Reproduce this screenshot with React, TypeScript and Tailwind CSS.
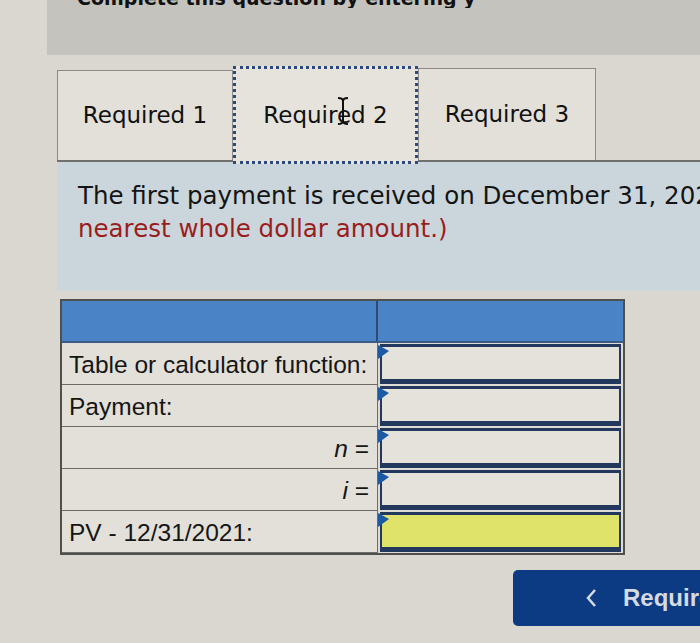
import React from "react";

function Flag() {
  return (
    <svg className="absolute left-0 top-[2px]" width="11" height="15" viewBox="0 0 11 15">
      <polygon points="0,0 11,6 0,14" fill="#1d5aa6" />
    </svg>
  );
}

function Row({ label, right, italic, yellow }: { label: string; right?: boolean; italic?: boolean; yellow?: boolean }) {
  return (
    <div className="flex h-[42px]">
      <div
        className={
          "w-[316px] h-full border-b border-r border-[#6b6b68] bg-[#e2e0d9] flex items-center pt-[4px] text-[24.5px] text-[#151515] " +
          (right ? "justify-end pr-[8px]" : "pl-[7px]")
        }
        style={{ fontFamily: '"Liberation Sans", Arial, sans-serif' }}
      >
        {italic ? (
          <span>
            <span className="italic">{label}</span> =
          </span>
        ) : (
          label
        )}
      </div>
      <div className="relative flex-1 h-full px-[2px] py-[1px] bg-[#dddbd3]">
        <div
          className={
            "h-full border-[#22385c] border-x-[2px] border-t-[3px] border-b-[5px] " +
            (yellow ? "bg-[#e0e36a]" : "bg-[#e4e2da]")
          }
        />
        <Flag />
      </div>
    </div>
  );
}

export default function App() {
  return (
    <div
      className="w-[700px] h-[643px] overflow-hidden bg-[#d9d7d0] relative"
      style={{ fontFamily: '"DejaVu Sans", Verdana, sans-serif' }}
    >
      {/* top grey panel */}
      <div className="ml-[47px] h-[55px] bg-[#c4c3be] overflow-hidden pl-[30px]">
        <div className="-mt-[12px] w-[398px] overflow-hidden text-[19px] leading-[20px] font-bold text-[#111] whitespace-nowrap">
          Complete this question by entering your answers in the tabs below.
        </div>
      </div>

      {/* tabs */}
      <div className="mt-[12px] ml-[57px] flex items-end h-[93px]">
        <div className="w-[176px] h-[90px] border border-b-0 border-[#8b8a86] bg-[#e2e0d9] flex items-center justify-center text-[23px] text-[#111]">
          Required 1
        </div>
        <div className="relative z-10 -mb-[4px] w-[185px] h-[98px] border-[3px] border-dotted border-[#2c4a7e] bg-[#e5e3dc] flex items-center justify-center text-[23px] text-[#111]">
          Required 2
          <svg className="absolute left-[100px] top-[27px]" width="14" height="30" viewBox="0 0 14 30">
            <path d="M2 2 Q7 2 7 5 Q7 2 12 2 M7 5 L7 25 M2 28 Q7 28 7 25 Q7 28 12 28" stroke="#111" strokeWidth="2" fill="none" />
          </svg>
        </div>
        <div className="w-[178px] h-[92px] border border-b-0 border-[#8b8a86] bg-[#e2e0d9] flex items-center justify-center text-[23px] text-[#111]">
          Required 3
        </div>
      </div>

      {/* instruction panel */}
      <div className="ml-[57px] h-[131px] bg-[#cbd6dc] border-t-[2px] border-[#6f6f6c] pl-[21px] pt-[17px] text-[24.5px] leading-[33px] whitespace-nowrap">
        <div className="text-[#141414]">The first payment is received on December 31, 2021</div>
        <div className="text-[#9a1d1d]">nearest whole dollar amount.)</div>
      </div>

      {/* table */}
      <div className="mt-[8px] ml-[60px] w-[565px] border-[2px] border-[#4f4f4d] bg-[#dddbd3]">
        <div className="flex h-[42px] bg-[#4a84c6] border-b-[2px] border-[#3a5c86]">
          <div className="w-[316px] h-full border-r-[2px] border-[#2e4a70]" />
          <div className="flex-1" />
        </div>
        <Row label="Table or calculator function:" />
        <Row label="Payment:" />
        <Row label="n" right italic />
        <Row label="i" right italic />
        <Row label="PV - 12/31/2021:" yellow />
      </div>

      {/* button */}
      <div
        className="absolute left-[513px] top-[570px] w-[240px] h-[56px] rounded-[5px] bg-[#0c3b84] flex items-center pl-[72px] gap-[26px] text-[#d6dae2] text-[24px] font-bold whitespace-nowrap"
        style={{ fontFamily: '"Liberation Sans", Arial, sans-serif' }}
      >
        <svg width="12" height="20" viewBox="0 0 12 20">
          <path d="M10 2 L3 10 L10 18" stroke="#d6dae2" strokeWidth="2.5" fill="none" />
        </svg>
        <span>Required 3</span>
      </div>
    </div>
  );
}
